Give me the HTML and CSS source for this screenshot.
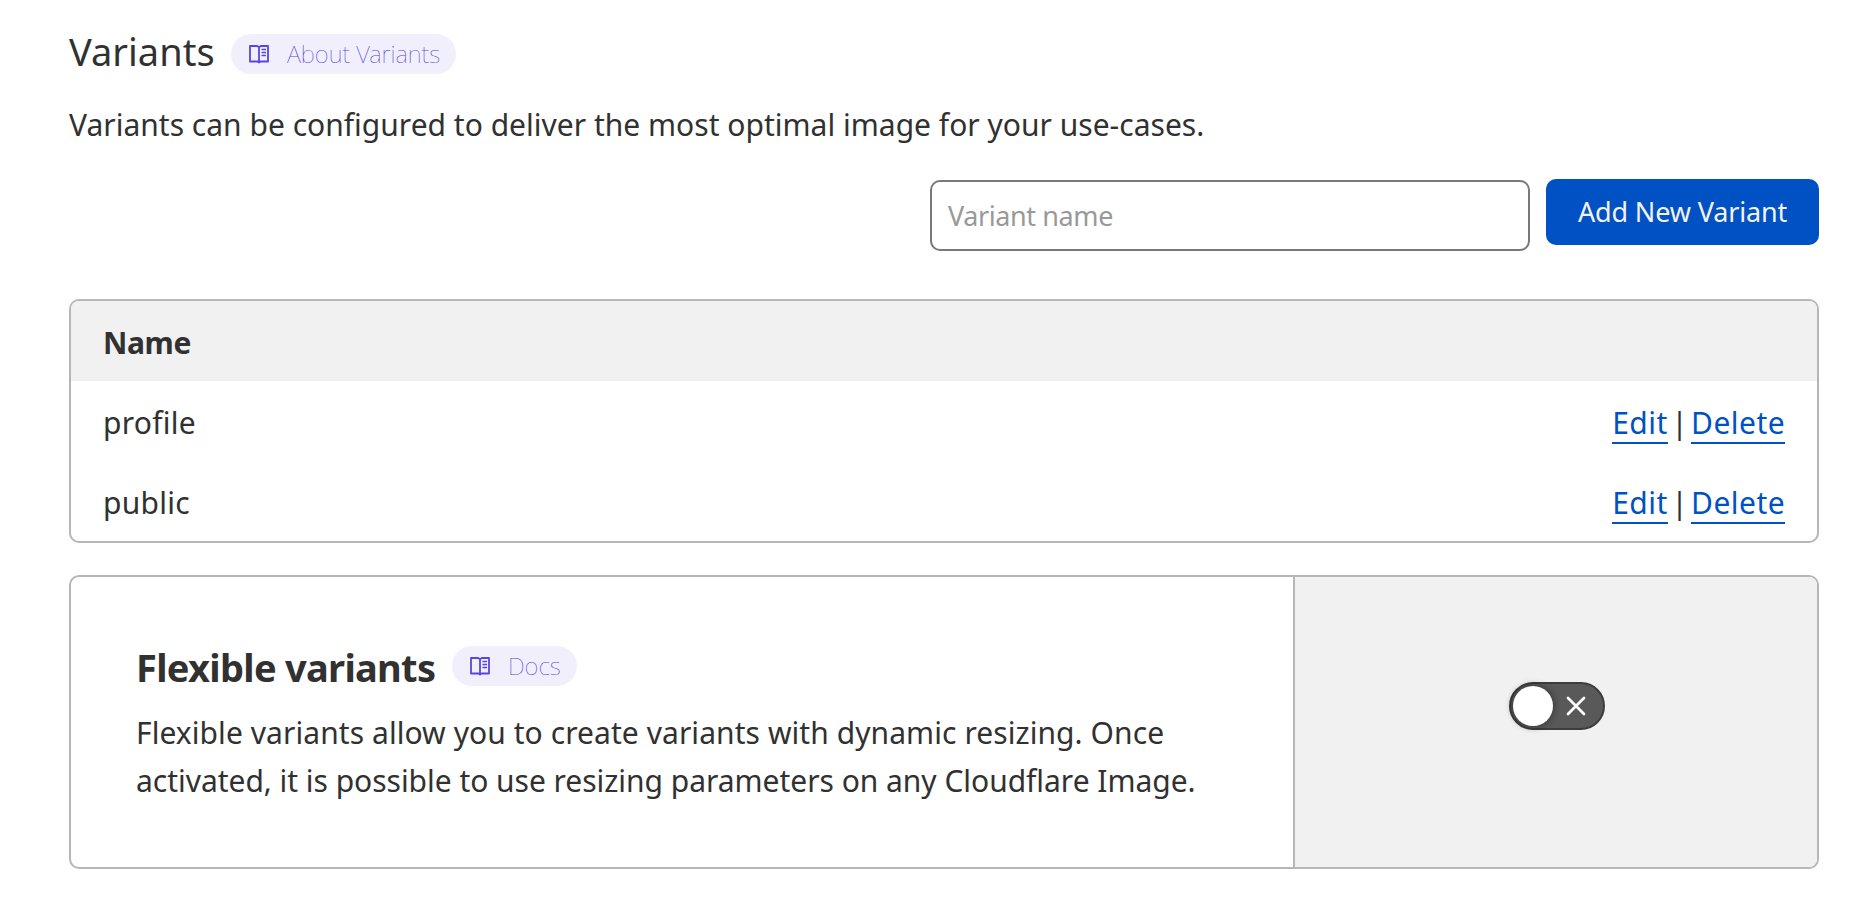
FILE: index.html
```html
<!DOCTYPE html>
<html lang="en">
<head>
<meta charset="utf-8">
<title>Variants</title>
<link rel="stylesheet" href="styles.css">
</head>
<body>
<svg class="defs" width="0" height="0">
  <symbol id="book" viewBox="0 0 20 20">
    <path d="M1 2h7.200L10 3.200 11.800 2H19v15.500h-7.500L10 18.500l-1.500-1H1zM10 3v16" fill="none" stroke="currentColor" stroke-width="1.800" stroke-linejoin="round"/>
    <path d="M12.500 5.500h4.500M12.500 8.500h4.500M12.500 11.500h4.500" fill="none" stroke="currentColor" stroke-width="1.500"/>
  </symbol>
</svg>
<main class="page">
  <header class="title-row">
    <h1 class="title">Variants</h1>
    <a class="pill"><svg class="pill-icon"><use href="#book"/></svg><span class="about-label">About Variants</span></a>
  </header>
  <p class="intro">Variants can be configured to deliver the most optimal image for your use-cases.</p>
  <form class="add-form">
    <input class="name-input" type="text" placeholder="Variant name">
    <button class="add-button" type="button">Add New Variant</button>
  </form>
  <section class="table">
    <div class="row head"><span class="head-label">Name</span></div>
    <div class="row"><span class="name">profile</span><span class="actions"><a class="link edit">Edit</a><span class="divider">|</span><a class="link delete">Delete</a></span></div>
    <div class="row"><span class="name">public</span><span class="actions"><a class="link edit">Edit</a><span class="divider">|</span><a class="link delete">Delete</a></span></div>
  </section>
  <section class="panel">
    <div class="panel-body">
      <div class="panel-heading">
        <h2 class="subtitle">Flexible variants</h2>
        <a class="pill"><svg class="pill-icon"><use href="#book"/></svg><span>Docs</span></a>
      </div>
      <p class="panel-text"><span class="line-one">Flexible variants allow you to create variants with dynamic resizing. Once</span><br><span class="line-two">activated, it is possible to use resizing parameters on any Cloudflare Image.</span></p>
    </div>
    <div class="panel-side">
      <div class="toggle"><span class="knob"></span><svg class="cross" viewBox="0 0 20 20"><path d="M2 2l16 16M18 2L2 18" stroke="#fff" stroke-width="2.700" stroke-linecap="round"/></svg></div>
    </div>
  </section>
</main>
</body>
</html>
```
FILE: styles.css
```css
* { box-sizing: border-box; }
body { margin: 0; background: #fff; color: #313131; font-family: "Noto Sans", sans-serif; font-size: 30px; line-height: 48px; }
.defs { display: block; }
h1, h2, p { margin: 0; white-space: nowrap; }
.page { padding: 28px 36px 0 69px; }
.title-row { display: flex; align-items: center; height: 52px; gap: 16px; }
.title { font-size: 38px; font-weight: 400; line-height: 50px; width: 146px; padding-bottom: 6px; }
.pill { display: flex; align-items: center; height: 40px; padding: 0 0 0 18px; border-radius: 20px; background: #f2effd; color: #5746de; font-size: 24px; font-weight: 100; line-height: 40px; white-space: nowrap; }
.pill-icon { flex: none; width: 20px; height: 20px; margin-right: 18px; }
.title-row .pill { width: 225px; }
.panel-heading .pill { width: 125px; margin-bottom: 4px; }
.intro { margin-top: 21px; letter-spacing: .01px; }
.add-form { display: flex; justify-content: flex-end; align-items: flex-start; gap: 16px; margin-top: 30px; height: 72px; }
.name-input { width: 600px; height: 71px; margin-top: 1px; padding: 0 16px 1px; border: 2px solid #797979; border-radius: 10px; font: 400 27px "Noto Sans", sans-serif; letter-spacing: -.4px; color: #313131; outline: 0; }
.name-input::placeholder { color: #999; }
.add-button { width: 273px; height: 66px; border: 0; border-radius: 10px; padding: 0 0 2px; background: #0051c3; color: #f2f2f2; font: 400 27px "Noto Sans", sans-serif; letter-spacing: -.15px; white-space: nowrap; }
.table { margin-top: 48px; border: 2px solid #b6b6b6; border-radius: 10px; overflow: hidden; height: 244px; }
.row { display: flex; align-items: center; justify-content: space-between; height: 80px; padding: 3px 32px 0 32px; }
.name { letter-spacing: .25px; }
.head { background: #f1f1f1; font-weight: 700; padding-top: 4px; }
.head-label { letter-spacing: -.4px; }
.actions { display: flex; }
.divider { width: 23px; text-align: center; line-height: 45px; }
.link { color: #0051c3; border-bottom: 2px solid #0051c3; line-height: 46px; height: 44px; text-align: center; letter-spacing: .5px; white-space: nowrap; }
.edit { width: 56px; }
.delete { width: 94px; }
.panel { display: flex; margin-top: 32px; height: 294px; border: 2px solid #b6b6b6; border-radius: 10px; overflow: hidden; }
.panel-body { flex: 1; padding: 64px 0 0 65px; }
.panel-heading { display: flex; align-items: center; gap: 16px; height: 54px; }
.subtitle { font-size: 38px; font-weight: 700; line-height: 52px; padding-bottom: 2px; width: 300px; letter-spacing: -.7px; }
.panel-text { margin-top: 14px; }
.line-one { letter-spacing: .07px; }
.line-two { letter-spacing: -.03px; }
.panel-side { display: flex; justify-content: center; width: 524px; padding: 105px 0 0 2px; border-left: 2px solid #b6b6b6; background: #f1f1f1; }
.toggle { display: flex; align-items: center; width: 96px; height: 48px; padding: 2px; border: 2px solid #3d3d3d; border-radius: 24px; background: #595959; }
.knob { width: 40px; height: 40px; border-radius: 50%; background: #fff; box-shadow: 0 0 6px 2px rgba(0,0,0,.3); }
.cross { width: 20px; height: 20px; margin-left: 13px; }
```
